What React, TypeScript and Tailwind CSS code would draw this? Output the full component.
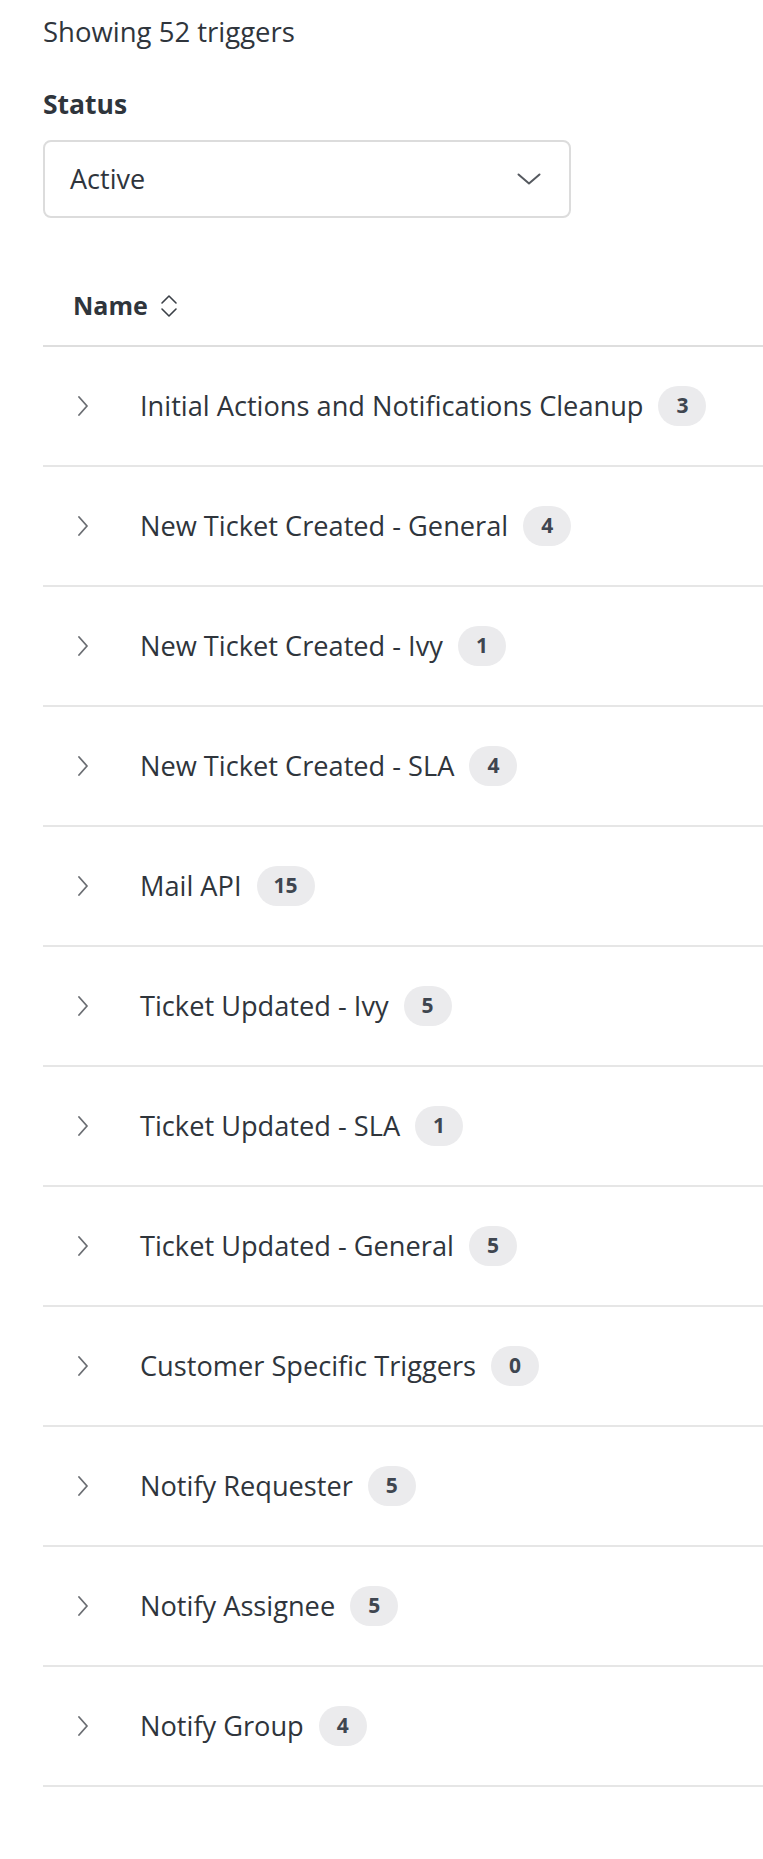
const TRIGGERS: { name: string; count: number }[] = [
  { name: "Initial Actions and Notifications Cleanup", count: 3 },
  { name: "New Ticket Created - General", count: 4 },
  { name: "New Ticket Created - Ivy", count: 1 },
  { name: "New Ticket Created - SLA", count: 4 },
  { name: "Mail API", count: 15 },
  { name: "Ticket Updated - Ivy", count: 5 },
  { name: "Ticket Updated - SLA", count: 1 },
  { name: "Ticket Updated - General", count: 5 },
  { name: "Customer Specific Triggers", count: 0 },
  { name: "Notify Requester", count: 5 },
  { name: "Notify Assignee", count: 5 },
  { name: "Notify Group", count: 4 },
];

function ChevronRight() {
  return (
    <svg width="10" height="22" viewBox="0 0 10 22" fill="none" className="text-[#6b6e73]">
      <path d="M1 2l8 9-8 9" stroke="currentColor" strokeWidth="1.8" strokeLinecap="round" strokeLinejoin="round" />
    </svg>
  );
}

function ChevronDown() {
  return (
    <svg width="24" height="12" viewBox="0 0 24 12" fill="none" className="text-[#55595f]">
      <path d="M1.5 1.5l10.5 9 10.5-9" stroke="currentColor" strokeWidth="2" strokeLinecap="round" strokeLinejoin="round" />
    </svg>
  );
}

function SortIcon() {
  return (
    <svg width="18" height="24" viewBox="0 0 18 24" fill="none" className="text-[#3b4047]">
      <path d="M2 9l7-7 7 7M2 15l7 7 7-7" stroke="currentColor" strokeWidth="1.6" strokeLinecap="round" strokeLinejoin="round" />
    </svg>
  );
}

export default function App() {
  return (
    <div
      className="min-h-[1859px] w-full overflow-hidden bg-white text-[#2f353c]"
      style={{ fontFamily: "'Open Sans', 'Noto Sans', sans-serif" }}
    >
      <div className="pl-[43px]">
        <p className="pt-[12px] text-[27.5px] leading-[40px]">Showing 52 triggers</p>

        <label className="mt-[32px] block text-[26.5px] font-bold leading-[40px]">Status</label>
        <button
          type="button"
          className="mt-[16px] flex h-[78px] w-[528px] items-center justify-between rounded-[8px] border-2 border-[#dcdcdc] bg-white pl-[25px] pr-[28px] text-left text-[27px]"
        >
          <span>Active</span>
          <ChevronDown />
        </button>

        <div className="mt-[48px]">
          <div className="flex h-[81px] items-center border-b-2 border-[#dedede] pl-[30px]">
            <span className="text-[25px] font-bold">Name</span>
            <span className="ml-[12px] flex items-center">
              <SortIcon />
            </span>
          </div>

          {TRIGGERS.map((t) => (
            <div
              key={t.name}
              className="flex h-[120px] items-center border-b-2 border-[#e6e6e6]"
            >
              <span className="flex w-[97px] pl-[35px]">
                <ChevronRight />
              </span>
              <span className="text-[27.2px] leading-none">{t.name}</span>
              <span className="ml-[15px] flex h-[40px] min-w-[48px] items-center justify-center rounded-full bg-[#ebebed] px-[17px] text-[21px] font-bold text-[#3f4650]">
                {t.count}
              </span>
            </div>
          ))}
        </div>
      </div>
    </div>
  );
}
